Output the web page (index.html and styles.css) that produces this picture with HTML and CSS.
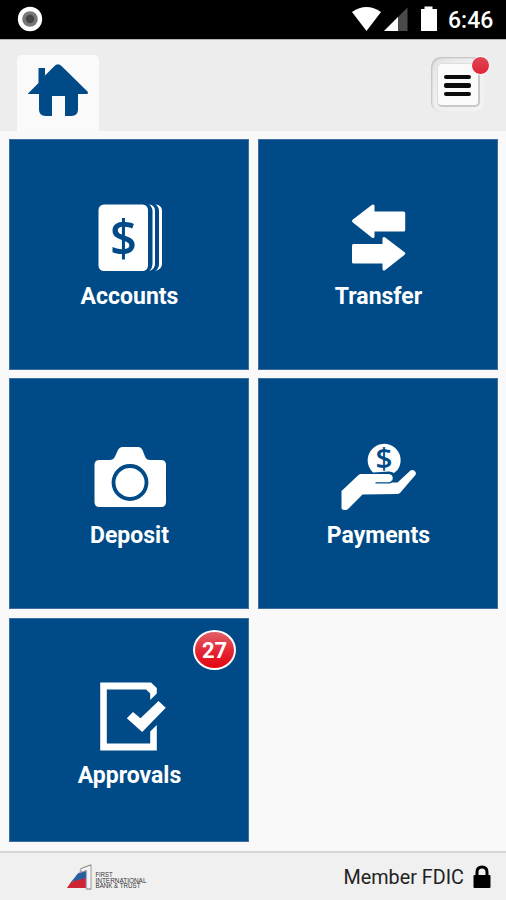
FILE: index.html
```html
<!DOCTYPE html>
<html lang="en">
<head>
    <meta charset="UTF-8">
    <meta name="viewport" content="width=device-width, initial-scale=1.0">
    <title>Mobile Banking</title>
    <link rel="stylesheet" href="styles.css">
</head>
<body>
    <div class="status-bar">
        <svg class="record" width="26" height="26" viewBox="0 0 26 26">
            <circle cx="13" cy="13" r="12.2" fill="#fff"/>
            <circle cx="13" cy="13" r="7.8" fill="#777"/>
            <circle cx="13" cy="13" r="4.2" fill="#444"/>
        </svg>
        <svg class="signals" width="88" height="28" viewBox="0 0 88 28">
            <path d="M0 7 Q14.500 -3 29 7 L14.500 26Z" fill="#fff"/>
            <path d="M32 26 L55.500 2.500 V26Z" fill="#4a4a4a"/>
            <path d="M32 26 L46 12 V26Z" fill="#fff"/>
            <path d="M69 4 H72.500 V1.500 H80.500 V4 H85 V26 H69Z" fill="#fff"/>
        </svg>
        <span class="clock">6:46</span>
    </div>

    <header>
        <a class="home-tab" href="#">
            <svg width="60" height="54" viewBox="0 0 60 54">
                <path d="M0 30.500 L10.500 20 V5 H17 V12.500 L26.500 3 Q30 -0.500 33.500 3 L60 29 L59.500 31 H50 V46.500 Q50 53 43.500 53 H37 V33 H24 V53 H17.500 Q11 53 11 46.500 V31 H0Z" fill="#004b87"/>
            </svg>
        </a>
        <div class="menu">
            <div class="menu-button">
                <span></span>
                <span></span>
                <span></span>
            </div>
            <div class="menu-dot"></div>
        </div>
    </header>

    <main>
        <a class="tile" href="#">
            <svg width="80" height="70" viewBox="0 0 80 70">
                <rect x="9.500" y="1.500" width="49.500" height="66.500" rx="5.500" fill="#fff"/>
                <path d="M60 1.500 Q66 2 66 8 V61 Q66 66 60.500 68 Q63.500 65 63.500 61 V8 Q63.500 4 60 1.500Z" fill="#fff"/>
                <path d="M66.500 1.500 Q73 2 73 8 V61 Q73 66 66.500 68 Q70 65 70 61 V8 Q70 4 66.500 1.500Z" fill="#fff"/>
                <text class="dollar" x="21" y="52.500" font-size="50" textLength="27" lengthAdjust="spacingAndGlyphs">$</text>
            </svg>
            <span>Accounts</span>
        </a>
        <a class="tile" href="#">
            <svg width="80" height="70" viewBox="0 0 80 70">
                <g fill="#fff" stroke="#fff" stroke-width="3" stroke-linejoin="round">
                    <path d="M15.500 18 L35 3 V10 H65.700 V27 H35 V33.500Z"/>
                    <path d="M65.700 50.500 L46 35.500 V42.500 H15.500 V59 H46 V66Z"/>
                </g>
            </svg>
            <span>Transfer</span>
        </a>
        <a class="tile" href="#">
            <svg width="80" height="70" viewBox="0 0 80 70">
                <path d="M10.500 18 H20.500 Q24.500 18 26 14.500 L29 8 Q30.500 5 33.500 5 H49 Q52 5 53.500 8 L56 14.500 Q57.500 18 61 18 H72 Q77 18 77 23 V60 Q77 65 72 65 H10.500 Q5.500 65 5.500 60 V23 Q5.500 18 10.500 18Z" fill="#fff"/>
                <circle cx="41" cy="40.500" r="16.500" fill="none" stroke="#004b87" stroke-width="3.800"/>
            </svg>
            <span>Deposit</span>
        </a>
        <a class="tile" href="#">
            <svg width="80" height="70" viewBox="0 0 80 70">
                <path d="M35 30.500 A16.500 16.500 0 1 1 59.500 28 L56 31 Q54 29.500 51 29.500Z" fill="#fff"/>
                <path d="M3.500 66.500 V49 L20.500 33 Q21.500 32 23 32 H51 Q55 32.500 54.700 36.500 Q54.500 40.500 51 40.500 H59.500 L72.500 28.500 Q76 27 77.800 30.500 V32.500 L62 51 Q61 52 59 52 L24.500 52.500 L9.500 67.500 Q5 69 3.500 66.500Z" fill="#fff"/>
                <path d="M37.500 40.800 H51 Q53.500 40.800 54.500 38.500" fill="none" stroke="#004b87" stroke-width="1.300"/>
                <text class="dollar" x="37.500" y="27" font-size="29" textLength="17" lengthAdjust="spacingAndGlyphs">$</text>
            </svg>
            <span>Payments</span>
        </a>
        <a class="tile" href="#">
            <svg width="80" height="70" viewBox="0 0 80 70">
                <path d="M11.200 0.500 H62 L67.800 6 V11.500 L61.200 18 V11.500 L57.200 7.500 H17.800 V61.500 H61.200 V49.500 L67.800 43 V68.500 H11.200Z" fill="#fff"/>
                <path d="M37.800 36.300 L44 30 L51.500 36.300 L69.500 19 L76.800 25.700 L53.200 50Z" fill="#fff"/>
            </svg>
            <span>Approvals</span>
            <div class="badge">27</div>
        </a>
    </main>

    <footer>
        <svg class="bank-logo" width="82" height="30" viewBox="0 0 82 30">
            <path d="M13 9 L19 4 V14 H8.500Z" fill="#b9bcc4"/>
            <path d="M11 11.500 L19 9 V18 L4 20Z" fill="#285f9f"/>
            <path d="M4 20 L19 16 V26 H0Z" fill="#cf2433"/>
            <text class="logo-one" x="11" y="26.500" textLength="19" lengthAdjust="spacingAndGlyphs">1</text>
            <g class="logo-name">
                <text x="28.500" y="15" textLength="17" lengthAdjust="spacingAndGlyphs">FIRST</text>
                <text x="28.500" y="20.500" textLength="51" lengthAdjust="spacingAndGlyphs">INTERNATIONAL</text>
                <text x="28.500" y="26" textLength="45" lengthAdjust="spacingAndGlyphs">BANK &amp; TRUST</text>
            </g>
        </svg>
        <div class="member">
            <span>Member FDIC</span>
            <svg width="18" height="24" viewBox="0 0 18 24">
                <path d="M4 11 V7 Q4 2 9 2 Q14 2 14 7 V11" fill="none" stroke="#000" stroke-width="3"/>
                <rect x="0.500" y="10" width="17" height="13" rx="1" fill="#000"/>
            </svg>
        </div>
    </footer>
</body>
</html>
```
FILE: styles.css
```css
* {
    box-sizing: border-box;
}

body {
    height: 900px;
    margin: 0;
    display: flex;
    flex-direction: column;
    overflow: hidden;
    font-family: Roboto, "Liberation Sans", sans-serif;
    background-color: #f9f9f9;
}

a {
    color: inherit;
    text-decoration: none;
}

svg {
    display: block;
    overflow: visible;
}

/* Status bar */
.status-bar {
    height: 39px;
    padding: 0 12px 0 17px;
    display: flex;
    align-items: center;
    background-color: #000;
    color: #fff;
}

.signals {
    margin-left: auto;
}

.clock {
    width: 46px;
    margin-left: 8px;
    padding-top: 4px;
    font-size: 23px;
    font-weight: 500;
    line-height: 28px;
    white-space: nowrap;
}

/* Header */
header {
    height: 92px;
    padding: 0 21px 0 17px;
    display: flex;
    justify-content: space-between;
    background-color: #ededed;
    border-top: 1px solid #b5b5b5;
}

.home-tab {
    width: 82px;
    height: 76px;
    margin-top: 15px;
    padding: 8px 0 0 11px;
    border-radius: 5px 5px 0 0;
    background-color: #fafafa;
}

.menu {
    position: relative;
    width: 54px;
    height: 55px;
    margin-top: 17px;
    padding: 6px 0 0 6px;
    border-radius: 10px;
    background: linear-gradient(135deg, #e2e2e2, #eee 35%, #f3f3f3);
    box-shadow: inset 1px 1px 2px #bbb;
}

.menu-button {
    width: 43px;
    height: 44px;
    padding: 11px 7px 0 6px;
    display: flex;
    flex-direction: column;
    gap: 4px;
    background-color: #fafafa;
    border: 1px solid #ddd;
    border-right: 2px solid #c8c8c8;
    border-bottom: 2px solid #c8c8c8;
    border-radius: 5px;
}

.menu-button span {
    height: 4.5px;
    border-radius: 2px;
    background-color: #0a0a0a;
}

.menu-dot {
    position: absolute;
    top: -1px;
    right: -5px;
    width: 19px;
    height: 19px;
    border: 1px solid #f6f6f6;
    border-radius: 50%;
    background: linear-gradient(#e04655, #df2338);
}

/* Tiles */
main {
    flex: 1;
    padding: 8px 8px 9px 9px;
    display: grid;
    grid-template-columns: 240px 240px;
    grid-template-rows: 231px 231px 225px;
    gap: 8.4px 9px;
    align-content: start;
}

.tile {
    position: relative;
    padding-top: 64px;
    display: flex;
    flex-direction: column;
    align-items: center;
    border: 1px solid #3f6d9f;
    background-color: #004b87;
    color: #fff;
}

.tile:last-child {
    margin-top: 1px;
}

.tile svg {
    margin-top: -1px;
}

.tile span {
    margin-top: 10px;
    padding-left: 1px;
    font-size: 23px;
    font-weight: 700;
    line-height: 28px;
}

.dollar {
    font-family: "Open Sans", sans-serif;
    font-weight: 600;
    fill: #004b87;
}

.badge {
    position: absolute;
    top: 11px;
    right: 12px;
    width: 43px;
    height: 40px;
    border: 2px solid #fff;
    border-radius: 50%;
    background: linear-gradient(#e06068, #e3202e 60%, #e30613);
    font-size: 22px;
    font-weight: 700;
    line-height: 37px;
    text-align: center;
}

/* Footer */
footer {
    height: 49px;
    padding: 0 15px 0 67px;
    display: flex;
    align-items: center;
    justify-content: space-between;
    background-color: #f0f0f0;
    border-top: 2px solid #d6d6d6;
}

.logo-one {
    font-family: Roboto, sans-serif;
    font-size: 34px;
    font-weight: 700;
    fill: #f4f4f4;
    stroke: #888;
    stroke-width: 0.8px;
}

.logo-name {
    font-family: "Liberation Sans", sans-serif;
    font-size: 6.5px;
    fill: #333;
}

.member {
    display: flex;
    align-items: center;
    gap: 9px;
    font-size: 19.8px;
    color: #222;
}

.member span {
    padding-top: 1px;
}
```
